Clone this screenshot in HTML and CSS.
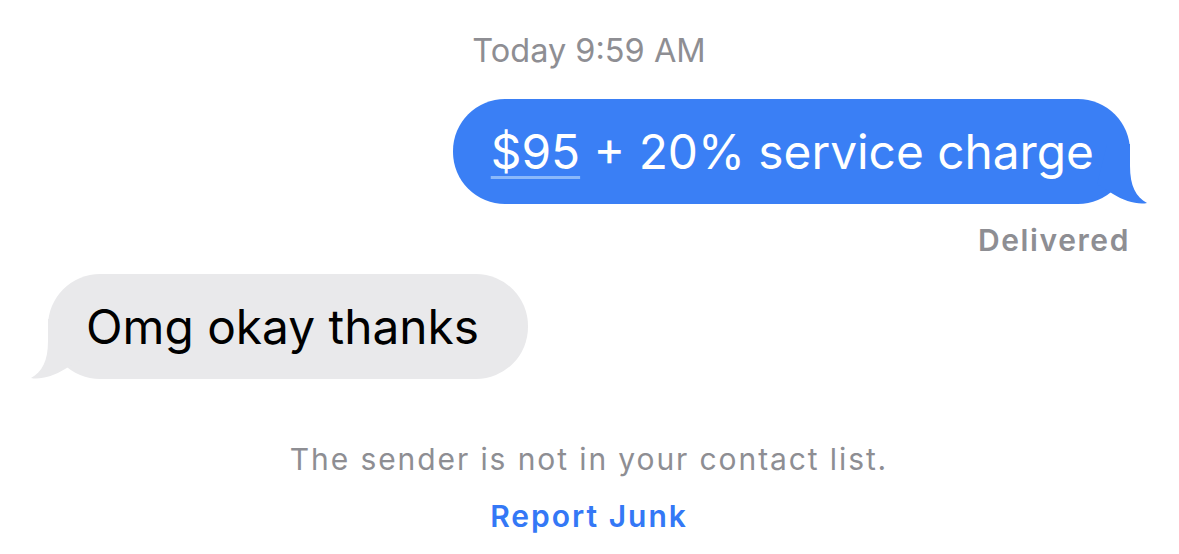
FILE: index.html
```html
<!DOCTYPE html>
<html lang="en">
<head>
    <meta charset="UTF-8">
    <meta name="viewport" content="width=device-width, initial-scale=1.0">
    <title>Messages</title>
    <link rel="stylesheet" href="styles.css">
</head>
<body>

    <div class="thread">
        <div class="timestamp"><span class="day">Today</span> 9:59 AM</div>

        <!-- mensagem enviada -->
        <div class="row sent">
            <div class="bubble bubble-sent">
                <span class="money">$95</span> + 20% service charge
                <svg class="tail tail-right" viewBox="0 0 50 60" width="50" height="60">
                    <path d="M10,0 H33 V22 C33,42 39,53 50,59 C41,61 27,57 16,50 L0,40 Z" fill="#3a7ff5"/>
                </svg>
            </div>
        </div>
        <div class="status">Delivered</div>

        <!-- mensagem recebida -->
        <div class="row received">
            <div class="bubble bubble-received">
                Omg okay thanks
                <svg class="tail tail-left" viewBox="0 0 50 60" width="50" height="60">
                    <path d="M10,0 H33 V22 C33,42 39,53 50,59 C41,61 27,57 16,50 L0,40 Z" fill="#e9e9eb"/>
                </svg>
            </div>
        </div>

        <div class="notice">
            <p class="notice-text">The sender is not in your contact list.</p>
            <a class="report" href="#">Report Junk</a>
        </div>
    </div>

</body>
</html>
```

FILE: styles.css
```css
body {
    font-family: 'Inter', 'Liberation Sans', sans-serif;
    margin: 0;
    padding: 0;
    background: #fff;
    color: #000;
}

.thread {
    display: flex;
    flex-direction: column;
    padding: 0 49px 0 48px;
}

.timestamp {
    text-align: center;
    color: #8e8e93;
    font-size: 32.5px;
    line-height: 38px;
    margin-top: 32px;
}

.row {
    display: flex;
}

.sent {
    justify-content: flex-end;
    margin-top: 29px;
}

.received {
    justify-content: flex-start;
    margin-top: 16px;
}

.bubble {
    position: relative;
    font-size: 47.8px;
    line-height: 54px;
    padding: 26px 36px 25px 38px;
    border-radius: 52px;
}

.bubble-sent {
    background-color: #3a7ff5;
    color: #fff;
}

.bubble-received {
    background-color: #e9e9eb;
    color: #000;
    padding-right: 49px;
}

.money {
    text-decoration: underline;
    text-decoration-color: #8ab8fa;
    text-decoration-thickness: 3px;
    text-underline-offset: 7px;
}

.tail {
    position: absolute;
    bottom: 0;
}

.tail-right {
    right: -17px;
}

.tail-left {
    left: -17px;
    transform: scaleX(-1);
}

.status {
    text-align: right;
    color: #8e8e93;
    font-size: 30px;
    font-weight: 600;
    letter-spacing: 1.6px;
    line-height: 36px;
    margin-top: 18px;
}

.notice {
    display: flex;
    flex-direction: column;
    align-items: center;
    margin-top: 62px;
}

.notice-text {
    margin: 0;
    color: #8e8e93;
    font-size: 30px;
    letter-spacing: 1.9px;
    line-height: 36px;
}

.report {
    color: #3478f6;
    font-size: 30px;
    font-weight: 600;
    letter-spacing: 2px;
    line-height: 36px;
    margin-top: 21px;
    text-decoration: none;
}
```
